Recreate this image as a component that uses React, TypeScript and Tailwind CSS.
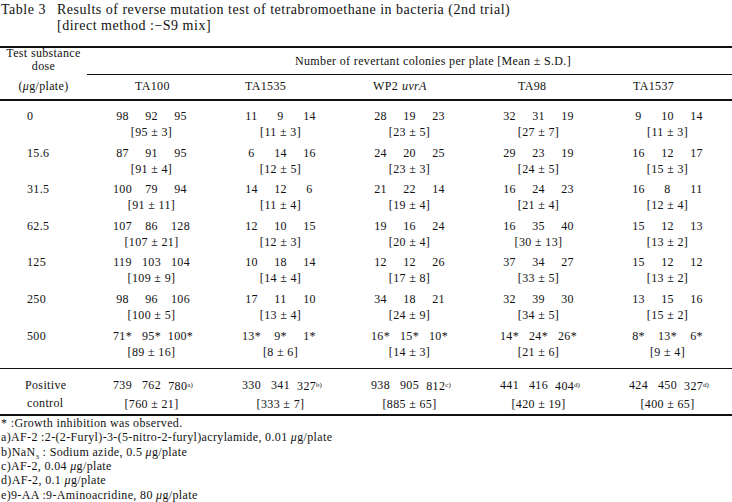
type Strain = (string | number)[];

type Row = {
  dose: string;
  data: Strain[];
};

const rows: Row[] = [
  { dose: "0", data: [[98, 92, 95, "95 ± 3"], [11, 9, 14, "11 ± 3"], [28, 19, 23, "23 ± 5"], [32, 31, 19, "27 ± 7"], [9, 10, 14, "11 ± 3"]] },
  { dose: "15.6", data: [[87, 91, 95, "91 ± 4"], [6, 14, 16, "12 ± 5"], [24, 20, 25, "23 ± 3"], [29, 23, 19, "24 ± 5"], [16, 12, 17, "15 ± 3"]] },
  { dose: "31.5", data: [[100, 79, 94, "91 ± 11"], [14, 12, 6, "11 ± 4"], [21, 22, 14, "19 ± 4"], [16, 24, 23, "21 ± 4"], [16, 8, 11, "12 ± 4"]] },
  { dose: "62.5", data: [[107, 86, 128, "107 ± 21"], [12, 10, 15, "12 ± 3"], [19, 16, 24, "20 ± 4"], [16, 35, 40, "30 ± 13"], [15, 12, 13, "13 ± 2"]] },
  { dose: "125", data: [[119, 103, 104, "109 ± 9"], [10, 18, 14, "14 ± 4"], [12, 12, 26, "17 ± 8"], [37, 34, 27, "33 ± 5"], [15, 12, 12, "13 ± 2"]] },
  { dose: "250", data: [[98, 96, 106, "100 ± 5"], [17, 11, 10, "13 ± 4"], [34, 18, 21, "24 ± 9"], [32, 39, 30, "34 ± 5"], [13, 15, 16, "15 ± 2"]] },
  { dose: "500", data: [["71*", "95*", "100*", "89 ± 16"], ["13*", "9*", "1*", "8 ± 6"], ["16*", "15*", "10*", "14 ± 3"], ["14*", "24*", "26*", "21 ± 6"], ["8*", "13*", "6*", "9 ± 4"]] },
];

const positive: Strain[] = [
  [739, 762, "780a)", "760 ± 21"],
  [330, 341, "327b)", "333 ± 7"],
  [938, 905, "812c)", "885 ± 65"],
  [441, 416, "404d)", "420 ± 19"],
  [424, 450, "327d)", "400 ± 65"],
];

const Ug = () => (
  <>
    <i>μ</i>g/plate
  </>
);

const Num = ({ v }: { v: string | number }) => {
  const m = String(v).match(/^(\d+)([a-e]\))$/);
  if (m) {
    return (
      <span className="w-[29px] text-center whitespace-nowrap">
        {m[1]}
        <span className="text-[7px] align-[3px] tracking-normal">{m[2]}</span>
      </span>
    );
  }
  return <span className="w-[29px] text-center whitespace-nowrap">{v}</span>;
};

const StrainCell = ({ d }: { d: Strain }) => (
  <div className="flex flex-col items-center">
    <div className="flex justify-center">
      <Num v={d[0]} />
      <Num v={d[1]} />
      <Num v={d[2]} />
    </div>
    <div className="whitespace-nowrap">[{d[3]}]</div>
  </div>
);

const strains = [
  { name: "TA100", pl: "pl-[48px]" },
  { name: "TA1535", pl: "pl-[29px]" },
  { name: "WP2", pl: "pl-[28px]", italic: "uvrA" },
  { name: "TA98", pl: "pl-[44px]" },
  { name: "TA1537", pl: "pl-[30px]" },
];

export default function App() {
  return (
    <div
      className="w-[732px] h-[502px] bg-white text-[#111] text-[12px] tracking-[0.35px] overflow-hidden"
      style={{ fontFamily: '"Liberation Serif", "DejaVu Serif", serif' }}
    >
      {/* title */}
      <div className="flex pt-[2px] text-[14px] leading-[16px] tracking-[0.5px]">
        <div className="w-[57px] pl-[1px] whitespace-nowrap">Table 3</div>
        <div>
          <div className="whitespace-nowrap">
            Results of reverse mutation test of tetrabromoethane in bacteria (2nd trial)
          </div>
          <div className="whitespace-nowrap">[direct method :−S9 mix]</div>
        </div>
      </div>

      {/* table */}
      <div className="mt-[12px] border-t-2 border-b-2 border-[#111]">
        <div className="grid grid-cols-[87px_repeat(5,1fr)] border-b-2 border-[#111]">
          <div className="h-[27px] flex flex-col items-center gap-[1px] leading-[12px] -mt-[1px]">
            <span className="whitespace-nowrap">Test substance</span>
            <span>dose</span>
          </div>
          <div className="col-span-5 h-[27px] border-b border-[#111] pl-[208px] pt-[6px] leading-[14px] whitespace-nowrap">
            Number of revertant colonies per plate [Mean ± S.D.]
          </div>
          <div className="h-[24px] flex justify-center items-center pb-[2px] whitespace-nowrap">
            (<Ug />)
          </div>
          {strains.map((s) => (
            <div key={s.name} className={`h-[24px] flex items-center pb-[2px] whitespace-nowrap ${s.pl}`}>
              {s.name}
              {s.italic && <i className="ml-[4px]">{s.italic}</i>}
            </div>
          ))}
        </div>

        <div className="grid grid-cols-[87px_repeat(5,1fr)] pb-[11px] border-b border-[#111] leading-[16px]">
          {rows.map((r) => (
            <div key={r.dose} className="contents">
              <div className="h-[36.6px] pt-[7px] pl-[27px]">{r.dose}</div>
              {r.data.map((d, i) => (
                <div key={i} className="h-[36.6px] pt-[7px]">
                  <StrainCell d={d} />
                </div>
              ))}
            </div>
          ))}
        </div>

        <div className="grid grid-cols-[87px_repeat(5,1fr)] h-[45px] pt-[7px] leading-[18px]">
          <div className="flex flex-col pl-[25px]">
            <span>Positive</span>
            <span className="pl-[2px]">control</span>
          </div>
          {positive.map((d, i) => (
            <StrainCell key={i} d={d} />
          ))}
        </div>
      </div>

      {/* footnotes */}
      <div className="pl-[1px] leading-[14.3px] whitespace-nowrap">
        <div>* :Growth inhibition was observed.</div>
        <div>a)AF-2 :2-(2-Furyl)-3-(5-nitro-2-furyl)acrylamide, 0.01 <Ug /></div>
        <div>
          b)NaN<sub className="text-[7px] align-[-1px]">3</sub> : Sodium azide, 0.5 <Ug />
        </div>
        <div>c)AF-2, 0.04 <Ug /></div>
        <div>d)AF-2, 0.1 <Ug /></div>
        <div>e)9-AA :9-Aminoacridine, 80 <Ug /></div>
      </div>
    </div>
  );
}
